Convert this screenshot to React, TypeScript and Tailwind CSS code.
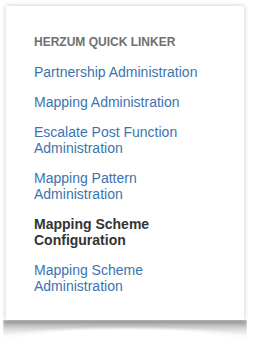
import React from 'react';

const LINKS = [
    { label: 'Partnership Administration', active: false },
    { label: 'Mapping Administration', active: false },
    { label: 'Escalate Post Function Administration', active: false },
    { label: 'Mapping Pattern Administration', active: false },
    { label: 'Mapping Scheme Configuration', active: true },
    { label: 'Mapping Scheme Administration', active: false },
];

const App: React.FC = () => {
    return (
        <div className="min-h-screen bg-white pt-[6px] pl-[6px] font-['Liberation_Sans',Arial,sans-serif]">
            <div className="w-[238px]">
                <div className="h-[314px] bg-white shadow-[0_0_5px_rgba(0,0,0,0.22)] pt-[28px] pl-[28px] pr-[28px]">
                    <h2 className="text-[12px] leading-[16px] font-bold uppercase text-[#707070]">Herzum Quick Linker</h2>
                    <ul className="mt-[14px] flex flex-col gap-[14px]">
                        {LINKS.map((link) => (
                            <li key={link.label} className="text-[14px] leading-[16px]">
                                {link.active ? (
                                    <span className="font-bold text-[#333333]">{link.label}</span>
                                ) : (
                                    <a href="#" className="text-[#3b73af]">{link.label}</a>
                                )}
                            </li>
                        ))}
                    </ul>
                </div>
                {/* lifted paper shadow */}
                <div className="-mx-[3px] h-[18px] bg-[linear-gradient(to_bottom,rgba(0,0,0,0.42),rgba(0,0,0,0.12)_55%,rgba(0,0,0,0))] [mask-image:radial-gradient(ellipse_54%_62%_at_50%_100%,transparent_70%,black_100%)] blur-[1px]"></div>
            </div>
        </div>
    );
};

export default App;
